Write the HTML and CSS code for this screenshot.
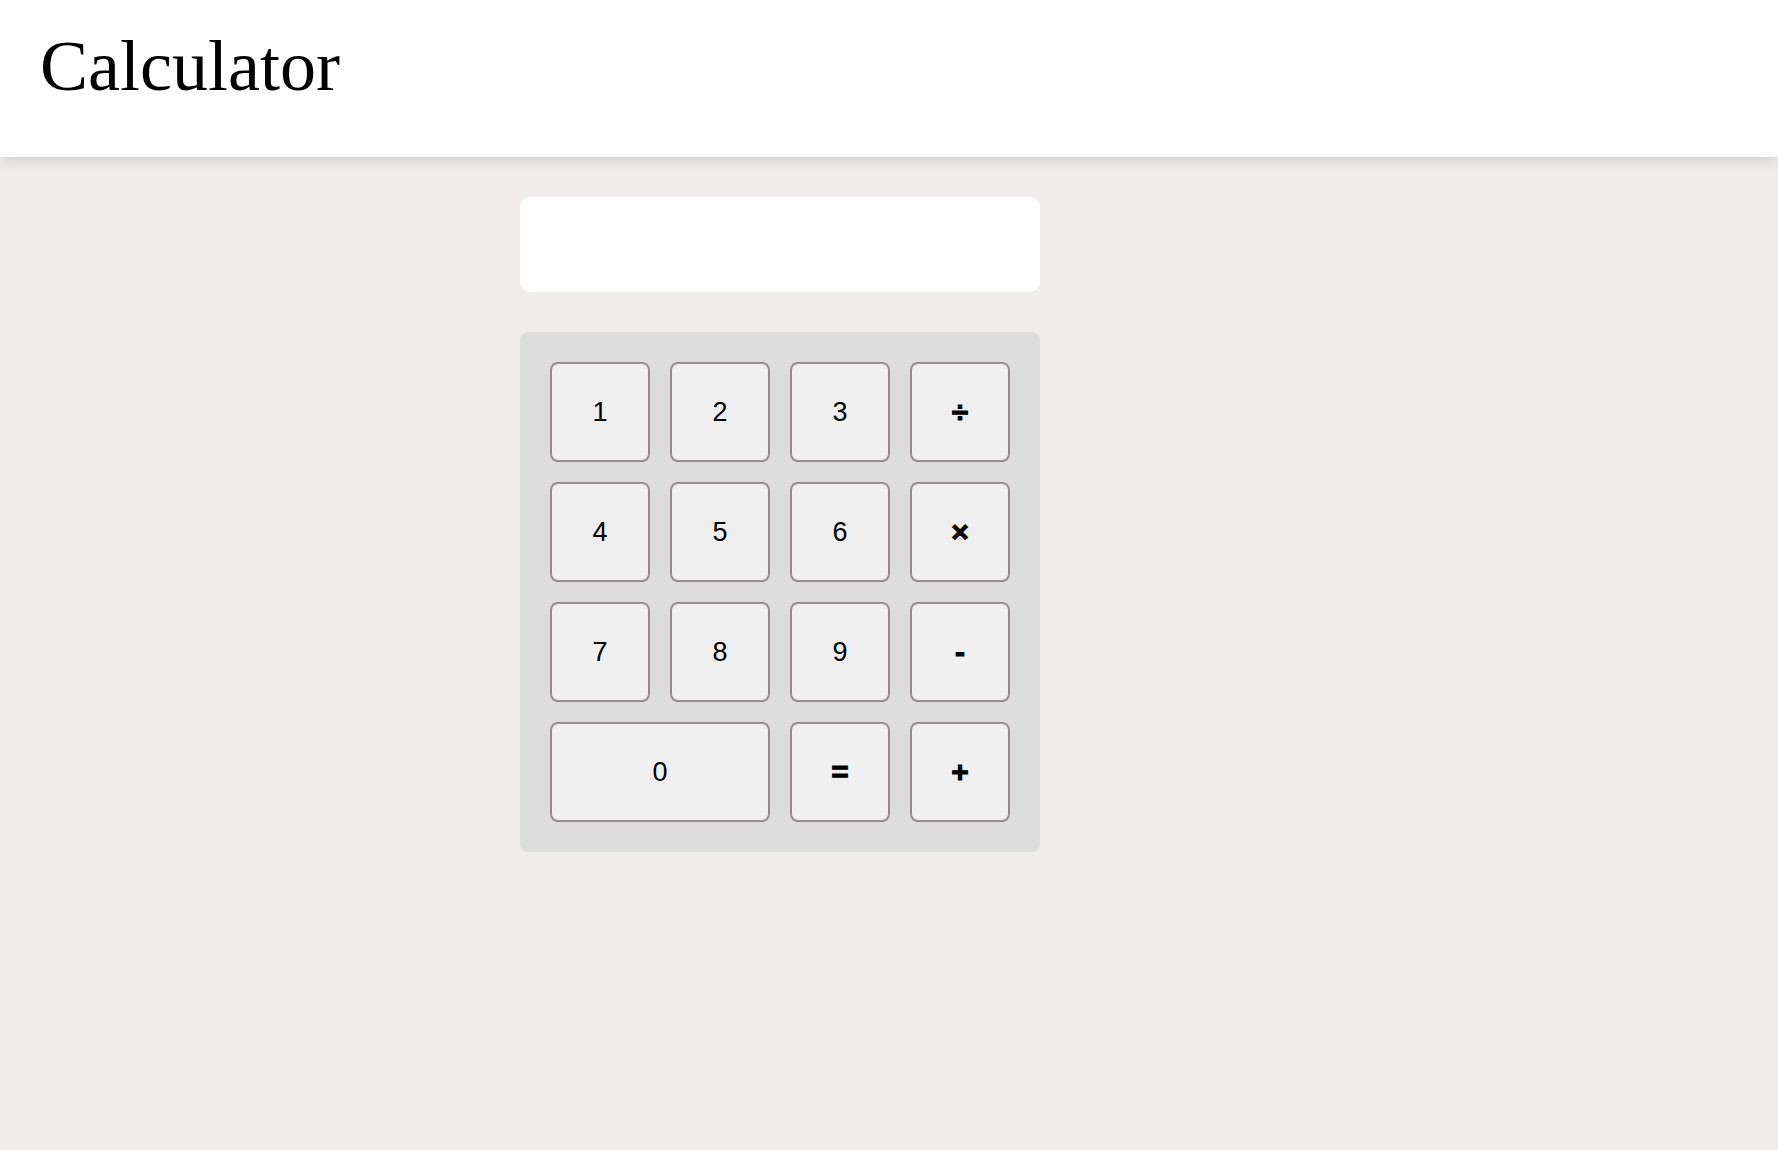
FILE: index.html
```html
<!DOCTYPE html>
<html lang="en">
<head>
<meta charset="utf-8">
<title>Calculator</title>
<link rel="stylesheet" href="styles.css">
</head>
<body>
<header class="top-bar">
  <h1 class="title">Calculator</h1>
</header>
<main class="calc">
  <div class="display"></div>
  <div class="keypad">
    <button class="key">1</button>
    <button class="key">2</button>
    <button class="key">3</button>
    <button class="key op">÷</button>
    <button class="key">4</button>
    <button class="key">5</button>
    <button class="key">6</button>
    <button class="key op">×</button>
    <button class="key">7</button>
    <button class="key">8</button>
    <button class="key">9</button>
    <button class="key op">-</button>
    <button class="key wide">0</button>
    <button class="key op">=</button>
    <button class="key op">+</button>
  </div>
</main>
</body>
</html>
```
FILE: styles.css
```css
html, body {
  margin: 0;
  padding: 0;
}
body {
  background: #f0ecec;
  font-family: "Liberation Serif", "Times New Roman", serif;
  min-height: 100vh;
}
.top-bar {
  background: #ffffff;
  height: 157px;
  box-sizing: border-box;
  padding: 25px 0 0 40px;
  box-shadow: 0 3px 14px rgba(0, 0, 0, 0.14);
  position: relative;
}
.title {
  margin: 0;
  font-size: 72px;
  font-weight: normal;
  line-height: normal;
  color: #000;
}
.calc {
  width: 520px;
  margin-left: 520px;
  padding-top: 40px;
  display: flex;
  flex-direction: column;
  gap: 40px;
}
.display {
  height: 95px;
  background: #ffffff;
  border-radius: 10px;
}
.keypad {
  background: #dcdcdc;
  border-radius: 8px;
  padding: 30px;
  display: grid;
  grid-template-columns: repeat(4, 100px);
  grid-auto-rows: 100px;
  gap: 20px;
}
.key {
  box-sizing: border-box;
  background: #efefef;
  border: 2px solid #978b8f;
  border-radius: 8px;
  font-family: "Liberation Sans", Arial, sans-serif;
  font-size: 27px;
  color: #000;
  padding: 0;
  margin: 0;
  cursor: pointer;
}
.key.op {
  font-weight: bold;
  font-size: 30px;
  -webkit-text-stroke: 1px #000;
}
.key.wide {
  grid-column: span 2;
}
```
